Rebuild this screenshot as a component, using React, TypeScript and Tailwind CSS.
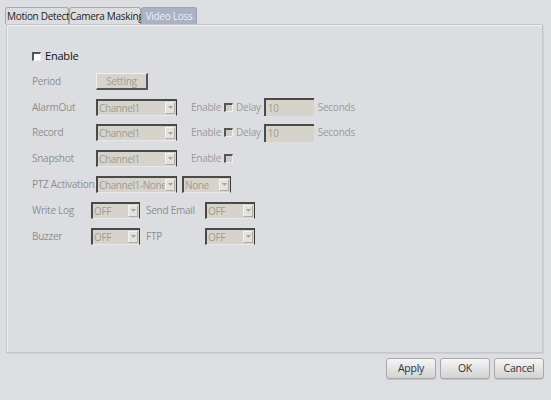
import React from "react";

const font = { fontFamily: '"Open Sans", "Noto Sans", sans-serif' };

function Select({ value, w }: { value: string; w: string }) {
  return (
    <div className={`flex h-[17px] shrink-0 items-stretch bg-[#d6d3cb] border-t-2 border-l-2 border-b border-r border-t-[#4a4a4a] border-l-[#4a4a4a] border-b-[#e8e8e8] border-r-[#3a3a3a] ${w}`}>
      <span className="flex-1 overflow-hidden whitespace-nowrap pl-[1px] leading-[14px] tracking-[-0.4px] text-[#a09c94]">{value}</span>
      <span className="my-[1px] mr-[1px] flex w-[10px] shrink-0 items-center justify-center bg-[#e4e2dc] border border-[#f4f4f4] border-b-[#b0aca4] border-r-[#b0aca4]">
        <svg width="5" height="3" viewBox="0 0 5 3"><path d="M0 0h5L2.5 3z" fill="#a8a49c" /></svg>
      </span>
    </div>
  );
}

function Box({ white, className = "" }: { white?: boolean; className?: string }) {
  return (
    <span className={`block h-[9px] w-[9px] shrink-0 border-t-2 border-l-2 border-t-[#555] border-l-[#555] border-b border-r border-b-[#eee] border-r-[#eee] ${white ? "bg-white" : "bg-[#cfcdc8]"} ${className}`} />
  );
}

function DelayInput() {
  return (
    <div className="ml-[3px] flex h-[18px] w-[50px] shrink-0 items-center bg-[#d6d3cb] border-t-2 border-l-2 border-t-[#4a4a4a] border-l-[#4a4a4a] pl-[2px] text-[#a09c94]">10</div>
  );
}

function Label({ children, w = "w-[64px]", className = "" }: { children: React.ReactNode; w?: string; className?: string }) {
  return <span className={`${w} ${className} shrink-0 whitespace-nowrap text-[#8e8e8e]`}>{children}</span>;
}

function Btn({ children }: { children: React.ReactNode }) {
  return (
    <button className="h-[21px] w-[50px] rounded-[3px] border border-[#a8a8a8] bg-gradient-to-b from-[#f6f6f6] to-[#d2d2d2] text-[10.5px] text-[#333] shadow-[0_1px_0_#c4c4c4]">
      {children}
    </button>
  );
}

function EnableDelay() {
  return (
    <>
      <span className="ml-[14px] whitespace-nowrap text-[#9a9a9a]">Enable</span>
      <Box className="ml-[3px]" />
      <span className="ml-[3px] text-[#9a9a9a]">Delay</span>
      <DelayInput />
      <span className="ml-[4px] text-[#9a9a9a]">Seconds</span>
    </>
  );
}

export default function App() {
  return (
    <div className="h-[400px] w-[551px] overflow-hidden bg-[#dddee2] text-[10px] tracking-[-0.25px]" style={font}>
      {/* Tabs */}
      <div className="flex h-[24px] items-end pl-[5px] pt-[7px]">
        <div className="flex h-[17px] w-[64px] items-center whitespace-nowrap rounded-t-[3px] border border-b-0 border-[#a8a8a8] bg-[#dcdde1] pl-[1px] leading-none tracking-[-0.3px] text-[#222]">Motion Detect</div>
        <div className="flex h-[17px] w-[72px] items-center whitespace-nowrap rounded-t-[3px] border border-b-0 border-[#a8a8a8] bg-[#dcdde1] leading-none tracking-[-0.3px] text-[#222]">Camera Masking</div>
        <div className="flex h-[17px] w-[56px] items-center justify-center whitespace-nowrap rounded-t-[3px] border border-b-0 border-[#9aa4b8] bg-[#a9b3c6] leading-none text-[#eef0f4]">Video Loss</div>
      </div>

      {/* Panel */}
      <div className="ml-[6px] h-[329px] w-[537px] border border-[#c6c7cb] shadow-[inset_1px_1px_0_#eeeff2,1px_1px_0_#cfd0d4] bg-[#dcdde1] pl-[25px] pt-[19px]">
        <div className="flex h-[25px] items-center">
          <Box white />
          <span className="ml-[4px] text-[11px] tracking-[-0.2px] text-[#111]">Enable</span>
        </div>

        <div className="flex h-[25px] items-center">
          <Label>Period</Label>
          <button className="h-[17px] w-[52px] bg-[#d6d3cb] border border-t-[#f0f0f0] border-l-[#f0f0f0] border-b-2 border-r-2 border-b-[#555] border-r-[#555] leading-none text-[#a09c94]">Setting</button>
        </div>

        <div className="flex h-[26px] items-center">
          <Label>AlarmOut</Label>
          <Select value="Channel1" w="w-[81px]" />
          <EnableDelay />
        </div>

        <div className="flex h-[25px] items-center">
          <Label>Record</Label>
          <Select value="Channel1" w="w-[81px]" />
          <EnableDelay />
        </div>

        <div className="flex h-[26px] items-center">
          <Label>Snapshot</Label>
          <Select value="Channel1" w="w-[81px]" />
          <span className="ml-[14px] text-[#9a9a9a]">Enable</span>
          <Box className="ml-[3px]" />
        </div>

        <div className="flex h-[26px] items-center">
          <Label>PTZ Activation</Label>
          <Select value="Channel1-None" w="w-[81px]" />
          <span className="ml-[5px]"><Select value="None" w="w-[49px]" /></span>
        </div>

        <div className="flex h-[26px] items-center">
          <Label w="w-[59px]">Write Log</Label>
          <Select value="OFF" w="w-[49px]" />
          <Label w="w-[59px]" className="ml-[6px]">Send Email</Label>
          <Select value="OFF" w="w-[50px]" />
        </div>

        <div className="flex h-[26px] items-center">
          <Label w="w-[59px]">Buzzer</Label>
          <Select value="OFF" w="w-[49px]" />
          <Label w="w-[59px]" className="ml-[6px]">FTP</Label>
          <Select value="OFF" w="w-[50px]" />
        </div>
      </div>

      {/* Buttons */}
      <div className="mt-[5px] flex justify-end gap-[4px] pr-[7px]">
        <Btn>Apply</Btn>
        <Btn>OK</Btn>
        <Btn>Cancel</Btn>
      </div>
    </div>
  );
}
